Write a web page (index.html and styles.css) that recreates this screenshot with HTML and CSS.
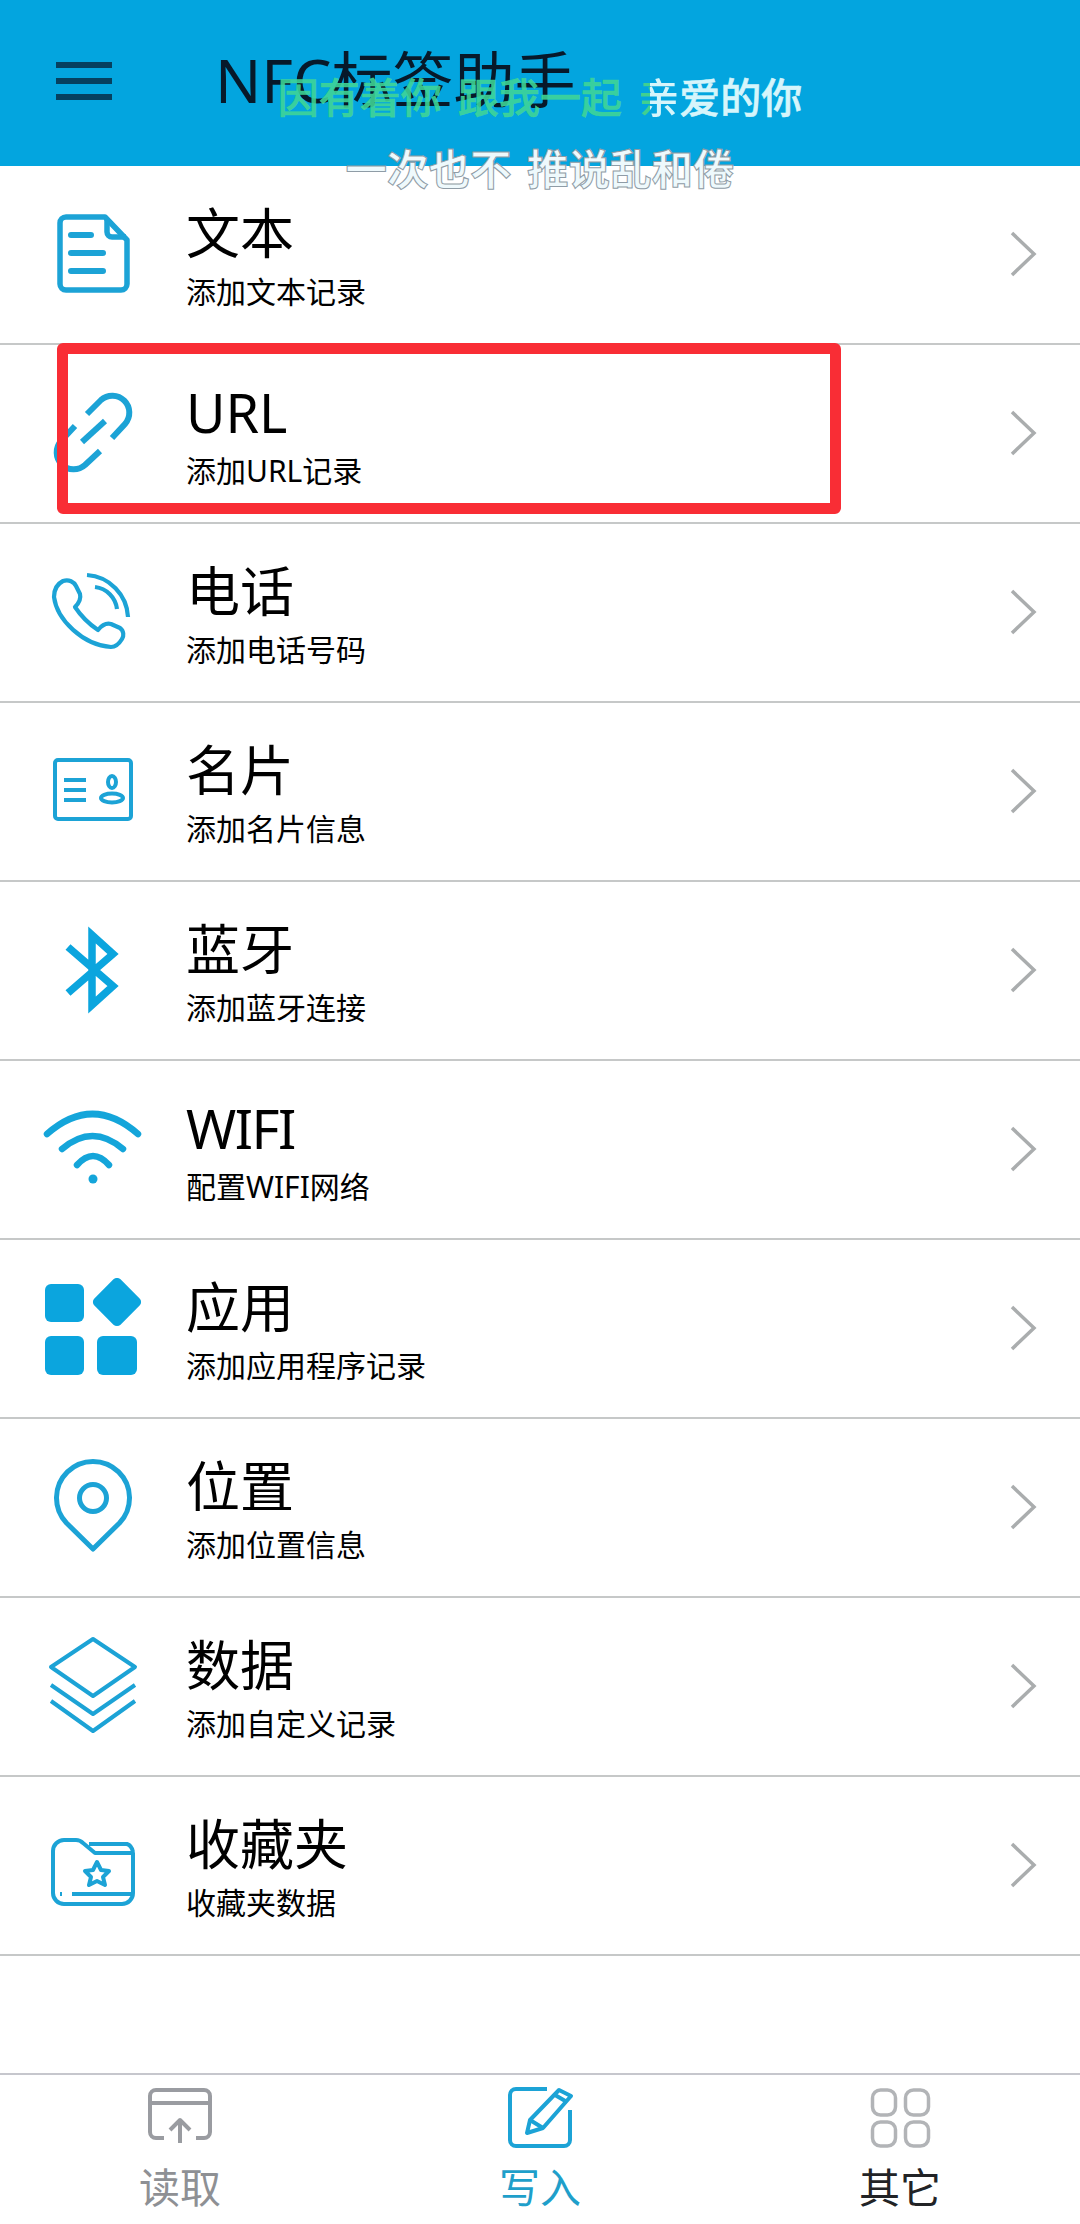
FILE: index.html
```html
<!DOCTYPE html>
<html lang="zh-CN">
<head>
<meta charset="utf-8">
<title>NFC标签助手</title>
<link rel="stylesheet" href="styles.css">
</head>
<body>
<div class="app">
  <header class="header">
    <div class="menu"><span></span><span></span><span></span></div>
    <h1 class="title">NFC标签助手</h1>
  </header>
  <div class="lyrics">
    <p class="lyric-a"><span class="sung">因有着你 跟我一起 </span><span class="split">亲</span>爱的你</p>
    <p class="lyric-b">一次也不 推说乱和倦</p>
  </div>
  <main class="list">
    <a class="row">
      <svg class="ico doc" viewBox="0 0 100 100"><path d="M23 13H62L84 36V80a6 6 0 0 1-6 6H23a6 6 0 0 1-6-6V19a6 6 0 0 1 6-6Z"/><path d="M64 14V28a5 5 0 0 0 5 5H83"/><path class="thick" d="M28 31H48M28 49H60M28 67H60"/></svg>
      <div class="text"><div class="name">文本</div><div class="desc">添加文本记录</div></div>
      <svg class="chev" viewBox="0 0 28 48"><path d="M3 3L25 24L3 45"/></svg>
    </a>
    <a class="row">
      <svg class="ico link" viewBox="0 0 100 100"><path d="M44 31L58 17a17 17 0 0 1 24 24L69 55"/><path d="M57 68L42 82a17 17 0 0 1-24-24L32 43"/><path d="M39 59L62 38"/></svg>
      <div class="text"><div class="name">URL</div><div class="desc">添加URL记录</div></div>
      <svg class="chev" viewBox="0 0 28 48"><path d="M3 3L25 24L3 45"/></svg>
    </a>
    <a class="row">
      <svg class="ico phone" viewBox="0 0 100 100"><path d="M20 19C26 17 31 20 33 24L37 32C38 36 36 41 32 45C38 54 46 62 55 68C59 63 64 61 68 62L77 66C81 69 81 74 79 77C76 82 72 85 68 85C40 83 14 58 11 35C11 28 14 22 20 19Z"/><path d="M44 13A44 44 0 0 1 85 55"/><path d="M52 25A25 25 0 0 1 74 47"/></svg>
      <div class="text"><div class="name">电话</div><div class="desc">添加电话号码</div></div>
      <svg class="chev" viewBox="0 0 28 48"><path d="M3 3L25 24L3 45"/></svg>
    </a>
    <a class="row">
      <svg class="ico thin" viewBox="0 0 100 100"><rect x="12" y="19" width="76" height="59" rx="3"/><path d="M21 39H43M21 49H43M21 59H43"/><ellipse cx="69" cy="41" rx="4" ry="6"/><ellipse cx="69" cy="57" rx="11" ry="4.500"/></svg>
      <div class="text"><div class="name">名片</div><div class="desc">添加名片信息</div></div>
      <svg class="chev" viewBox="0 0 28 48"><path d="M3 3L25 24L3 45"/></svg>
    </a>
    <a class="row">
      <svg class="ico bt" viewBox="0 0 100 100"><path d="M25 27L70 66L49 85V15L70 34L25 73"/></svg>
      <div class="text"><div class="name">蓝牙</div><div class="desc">添加蓝牙连接</div></div>
      <svg class="chev" viewBox="0 0 28 48"><path d="M3 3L25 24L3 45"/></svg>
    </a>
    <a class="row">
      <svg class="ico wifi" viewBox="0 0 100 100"><path d="M4 35Q49.500 -5 95 35"/><path d="M19 50Q49.500 24 80 50"/><path d="M34 66Q50 48 66 66"/><circle class="dot" cx="50" cy="80" r="4.500"/></svg>
      <div class="text"><div class="name latin">WIFI</div><div class="desc">配置WIFI网络</div></div>
      <svg class="chev" viewBox="0 0 28 48"><path d="M3 3L25 24L3 45"/></svg>
    </a>
    <a class="row">
      <svg class="ico apps" viewBox="0 0 100 100"><rect x="2" y="6" width="39" height="38" rx="6"/><rect x="2" y="58" width="39" height="39" rx="6"/><rect x="54" y="58" width="40" height="39" rx="6"/><rect x="55.500" y="5.500" width="37" height="37" rx="5" transform="rotate(45 74 24)"/></svg>
      <div class="text"><div class="name">应用</div><div class="desc">添加应用程序记录</div></div>
      <svg class="chev" viewBox="0 0 28 48"><path d="M3 3L25 24L3 45"/></svg>
    </a>
    <a class="row">
      <svg class="ico" viewBox="0 0 100 100"><path d="M50 92L23.500 66A36.500 36.500 0 1 1 76.500 66Z"/><circle cx="50" cy="41" r="13.500"/></svg>
      <div class="text"><div class="name">位置</div><div class="desc">添加位置信息</div></div>
      <svg class="chev" viewBox="0 0 28 48"><path d="M3 3L25 24L3 45"/></svg>
    </a>
    <a class="row">
      <svg class="ico thin" viewBox="0 0 100 100"><path d="M50 3L92 31L50 60L8 31Z"/><path d="M8 49L50 78L92 49"/><path d="M8 65L50 95L92 65"/></svg>
      <div class="text"><div class="name">数据</div><div class="desc">添加自定义记录</div></div>
      <svg class="chev" viewBox="0 0 28 48"><path d="M3 3L25 24L3 45"/></svg>
    </a>
    <a class="row">
      <svg class="ico thin" viewBox="0 0 100 100"><path d="M21 25H33C36 25 38 26 40 28L52 38H90V78A11 11 0 0 1 79 89H21A11 11 0 0 1 10 78V36A11 11 0 0 1 21 25Z"/><path d="M46 29H84C87 30 89 32 90 37"/><path d="M29 79H90M17 79H19"/><path d="M54 47L58 55L66 56L60 62L62 70L54 66L46 70L48 62L42 56L50 55Z"/></svg>
      <div class="text"><div class="name">收藏夹</div><div class="desc">收藏夹数据</div></div>
      <svg class="chev" viewBox="0 0 28 48"><path d="M3 3L25 24L3 45"/></svg>
    </a>
  </main>
  <nav class="tabs">
    <div class="tab tab-read">
      <svg class="tab-ico" viewBox="0 0 70 64"><path d="M19 52H11a6 6 0 0 1-6-6V10a6 6 0 0 1 6-6H59a6 6 0 0 1 6 6V46a6 6 0 0 1-6 6H51"/><path d="M5 17H65"/><path d="M35 57V35M25 44L35 34L45 44"/></svg>
      <span>读取</span>
    </div>
    <div class="tab tab-write">
      <svg class="tab-ico" viewBox="0 0 70 64"><path d="M42 3H11a6 6 0 0 0-6 6V54a6 6 0 0 0 6 6H59a6 6 0 0 0 6-6V24"/><path d="M22 47L25 34L54 4L66 10L38 42Z"/><path d="M50 9L62 16M25 34L38 42"/></svg>
      <span>写入</span>
    </div>
    <div class="tab tab-other">
      <svg class="tab-ico" viewBox="0 0 70 64"><rect x="7.500" y="4" width="23" height="25" rx="8"/><rect x="40.500" y="4" width="23" height="25" rx="8"/><rect x="7.500" y="36" width="23" height="24" rx="8"/><rect x="40.500" y="36" width="23" height="24" rx="8"/></svg>
      <span>其它</span>
    </div>
  </nav>
  <div class="highlight"></div>
</div>
</body>
</html>
```

FILE: styles.css
```css
* { box-sizing: border-box; }
html, body { margin: 0; padding: 0; background: #fff; }
body { font-family: "Noto Sans", "Noto Sans CJK SC", sans-serif; color: #000; }

.app {
  position: relative;
  width: 1080px;
  height: 2224px;
  display: flex;
  flex-direction: column;
  overflow: hidden;
  background: #fff;
}

.header {
  height: 166px;
  flex: none;
  background: #03a5df;
  display: flex;
  align-items: flex-start;
  padding: 62px 0 0 56px;
  gap: 103px;
}
.menu {
  width: 56px;
  height: 38px;
  display: flex;
  flex-direction: column;
  justify-content: space-between;
}
.menu span { display: block; height: 6px; background: #06405f; }
.title {
  margin: -23px 0 0;
  font-size: 61px;
  line-height: 82px;
  font-weight: 400;
  color: #07192a;
  white-space: nowrap;
}

.lyrics {
  position: absolute;
  left: 0;
  right: 0;
  top: 65px;
  text-align: center;
  font-family: "Noto Sans CJK SC", sans-serif;
  font-size: 41px;
  font-weight: 500;
  line-height: 60px;
  z-index: 2;
}
.lyrics p { margin: 0; white-space: pre; }
.lyric-a {
  color: #d6f5fb;
  word-spacing: 7px;
  -webkit-text-stroke: .6px currentColor;
}
.lyric-b {
  margin-top: 12px !important;
  color: #eef9fc;
  font-size: 41.500px;
  word-spacing: 6px;
  font-weight: 700;
  -webkit-text-stroke: 1px #8f9ca6;
}
.sung { color: rgba(64, 214, 150, .88); }
.split {
  background: linear-gradient(90deg, #40d090 30%, #d6f5fb 30%);
  -webkit-background-clip: text;
  background-clip: text;
  -webkit-text-stroke: 0;
  color: transparent;
}

.list { flex: 1; }
.row {
  height: 179px;
  display: flex;
  align-items: center;
  padding: 0 43px 2px 43px;
  border-bottom: 2px solid #c6c8c8;
}
.ico {
  width: 100px;
  height: 100px;
  flex: none;
  fill: none;
  stroke: #1ca3d6;
  stroke-width: 5;
  stroke-linecap: butt;
  stroke-linejoin: round;
}
.ico.thin { stroke-width: 4; }
.ico.phone { stroke-width: 4.200; }
.ico.doc { stroke-width: 5.500; }
.ico .thick { stroke-width: 6; stroke-linecap: round; }
.ico.link { stroke-width: 6; }
.ico.bt { stroke: #0ba5de; stroke-width: 7.500; stroke-linejoin: miter; }
.ico.wifi { stroke: #14a5da; stroke-width: 6.500; stroke-linecap: round; }
.ico .dot { fill: #14a5da; stroke: none; }
.ico.apps { fill: #0ba5de; stroke: none; }

.text { margin-left: 43px; margin-top: 6px; }
.name {
  font-size: 54px;
  line-height: 64px;
  font-weight: 400;
}
.name.latin { letter-spacing: -1.500px; }
.desc {
  font-size: 30px;
  line-height: 40px;
  margin-top: 7px;
}
.chev {
  margin-left: auto;
  width: 28px;
  height: 48px;
  flex: none;
  fill: none;
  stroke: #aaadae;
  stroke-width: 3.500;
}

.tabs {
  flex: none;
  height: 151px;
  border-top: 2px solid #c6c7cd;
  display: grid;
  grid-template-columns: repeat(3, 1fr);
}
.tab {
  display: flex;
  flex-direction: column;
  align-items: center;
  padding-top: 11px;
  font-family: "Noto Sans CJK SC", sans-serif;
  font-size: 41px;
  line-height: 48px;
}
.tab span { margin-top: 11px; }
.tab-ico { width: 70px; height: 64px; fill: none; stroke-width: 4; stroke-linejoin: round; }
.tab-read { color: #8e9094; }
.tab-read .tab-ico { stroke: #9a9ca1; }
.tab-write { color: #1f9fca; }
.tab-write .tab-ico { stroke: #1ca3d6; }
.tab-other { color: #222326; }
.tab-other .tab-ico { stroke: #b2b4b7; stroke-width: 3.500; }

.highlight {
  position: absolute;
  left: 57px;
  top: 343px;
  width: 784px;
  height: 171px;
  border: 11px solid #f92d35;
  border-radius: 6px;
  z-index: 3;
}
```
